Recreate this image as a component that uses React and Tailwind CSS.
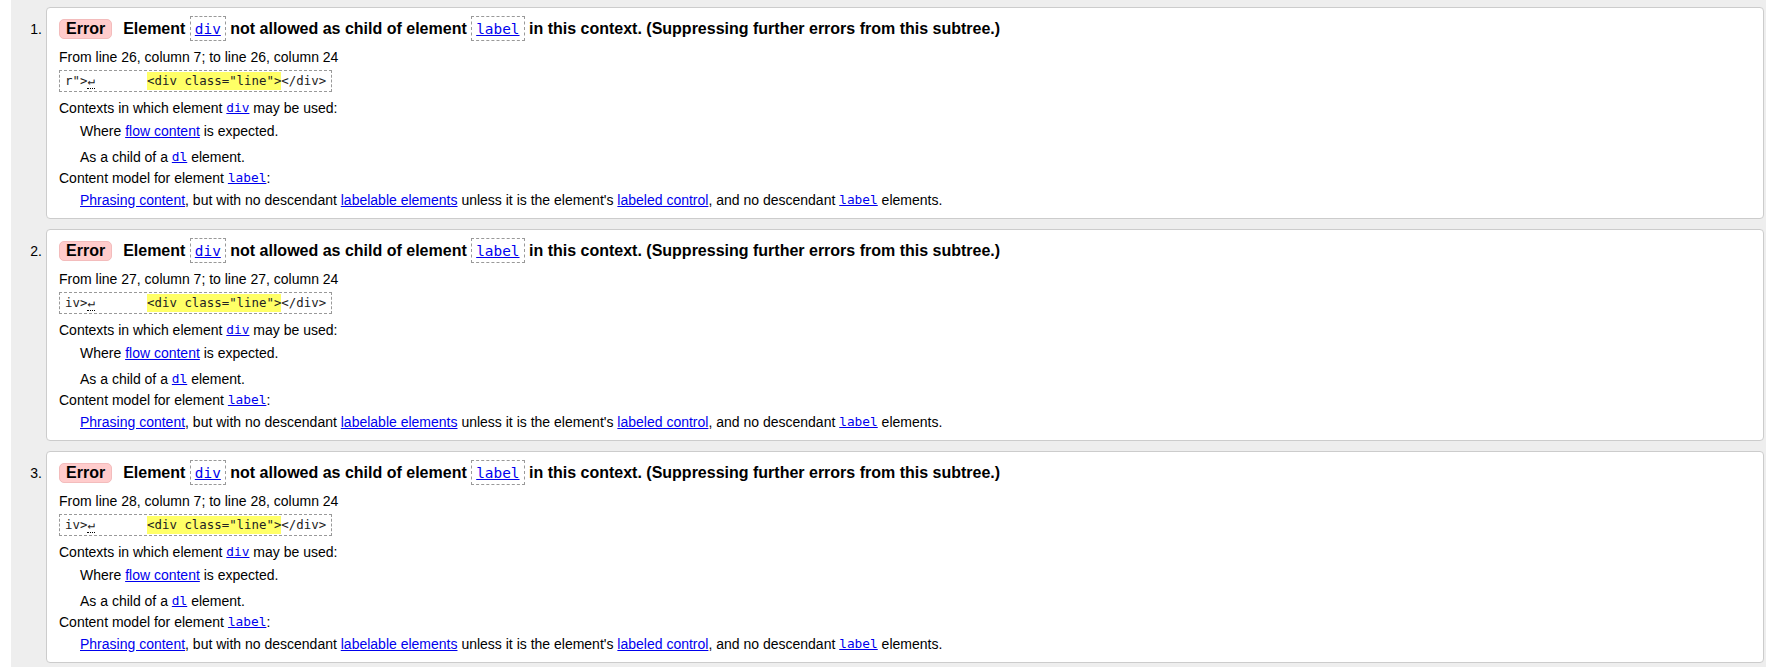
import React from "react"

const errors = [
  { n: 1, line: 26, lead: 'r">' },
  { n: 2, line: 27, lead: "iv>" },
  { n: 3, line: 28, lead: "iv>" },
]

const mono = "font-['DejaVu_Sans_Mono',monospace]"

function CodeLink({ children, big }) {
  if (big) {
    return (
      <span className="inline-block h-[25px] px-[4px] border border-dashed border-[#999] align-middle leading-[23px]">
        <a href="#" className={`${mono} text-[14.4px] font-normal text-[#0000ee] underline`}>{children}</a>
      </span>
    )
  }
  return <a href="#" className={`${mono} text-[12.8px] text-[#0000ee] underline`}>{children}</a>
}

function Link({ children }) {
  return <a href="#" className="text-[#0000ee] underline">{children}</a>
}

function ErrorCard({ n, line, lead }) {
  return (
    <li className="flex">
      {/* marcador da lista */}
      <div className="w-[35px] shrink-0 pt-[12px] pr-[4px] text-right text-[14px] leading-[20px] text-black">{n}.</div>

      <div className="w-[1718px] rounded-[4px] border border-[#ccc] bg-white pl-[12px] pt-[8px] pb-[8px] text-[14px] text-black">
        {/* título */}
        <div className="flex h-[25px] items-center whitespace-pre text-[16px] font-bold">
          <span className="mr-[11px] inline-flex h-[20px] items-center rounded-[5px] border border-[#f3bcbc] bg-[#ffcccc] px-[6px]">Error</span>
          <span>Element </span>
          <CodeLink big>div</CodeLink>
          <span> not allowed as child of element </span>
          <CodeLink big>label</CodeLink>
          <span> in this context. (Suppressing further errors from this subtree.)</span>
        </div>

        <div className="mt-[6px] flex h-[20px] items-center">From line {line}, column 7; to line {line}, column 24</div>

        {/* trecho do código */}
        <div className={`mt-[3px] inline-flex h-[22px] items-center border border-dashed border-[#999] px-[5px] ${mono} text-[12.4px] whitespace-pre text-[#222]`}>
          <span>{lead}</span>
          <span className="border-b border-dotted border-black leading-[14px]">↵</span>
          <span>{"       "}</span>
          <span className="bg-[#ffff66]">{'<div class="line">'}</span>
          <span>{"</div>"}</span>
        </div>

        <div className="mt-[6px] flex h-[20px] items-center whitespace-pre">
          Contexts in which element <CodeLink>div</CodeLink> may be used:
        </div>
        <div className="mt-[3px] flex h-[20px] items-center whitespace-pre pl-[21px]">
          Where <Link>flow content</Link> is expected.
        </div>
        <div className="mt-[6px] flex h-[20px] items-center whitespace-pre pl-[21px]">
          As a child of a <CodeLink>dl</CodeLink> element.
        </div>
        <div className="mt-[1px] flex h-[20px] items-center whitespace-pre">
          Content model for element <CodeLink>label</CodeLink>:
        </div>
        <div className="mt-[2px] flex h-[20px] items-center whitespace-pre pl-[21px]">
          <Link>Phrasing content</Link>, but with no descendant <Link>labelable elements</Link> unless it is the element's <Link>labeled control</Link>, and no descendant <CodeLink>label</CodeLink> elements.
        </div>
      </div>
    </li>
  )
}

export default function App() {
  return (
    <main className="h-[667px] w-full overflow-hidden bg-white pl-[11px] font-['Liberation_Sans',Arial,sans-serif]">
      <ol className="flex h-full flex-col gap-[10px] bg-[#eeeeee] pt-[7px]">
        {errors.map((e) => (
          <ErrorCard key={e.n} {...e} />
        ))}
      </ol>
    </main>
  )
}
